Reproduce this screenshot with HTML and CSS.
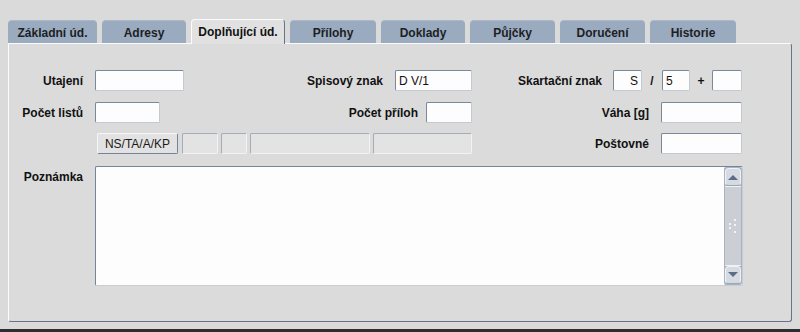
FILE: index.html
```html
<!DOCTYPE html>
<html lang="cs">
<head>
    <meta charset="utf-8">
    <title>Doplňující údaje</title>
    <link rel="stylesheet" href="styles.css">
</head>
<body>
    <div class="tabs">
        <div class="tab t-zakladni">Základní úd.</div>
        <div class="tab t-adresy">Adresy</div>
        <div class="tab active">Doplňující úd.</div>
        <div class="tab t-prilohy">Přílohy</div>
        <div class="tab t-doklady">Doklady</div>
        <div class="tab t-pujcky">Půjčky</div>
        <div class="tab t-doruceni">Doručení</div>
        <div class="tab t-historie">Historie</div>
    </div>

    <div class="panel">
        <div class="row">
            <label class="lbl w74">Utajení</label>
            <input type="text" class="field w89">
            <label class="lbl w199">Spisový znak</label>
            <input type="text" class="field w77" value="D V/1">
            <label class="lbl w130 m11">Skartační znak</label>
            <input type="text" class="field w29 right" value="S">
            <span class="sep w20">/</span>
            <input type="text" class="field w28" value="5">
            <span class="sep w22">+</span>
            <input type="text" class="field w30">
        </div>
        <div class="row">
            <label class="lbl w74">Počet listů</label>
            <input type="text" class="field w65">
            <label class="lbl w258 m8">Počet příloh</label>
            <input type="text" class="field w46">
            <label class="lbl w177">Váha [g]</label>
            <input type="text" class="field w81">
        </div>
        <div class="row row-codes">
            <button type="button" class="btn">NS/TA/A/KP</button>
            <input type="text" class="field off w36" disabled>
            <input type="text" class="field off w26" disabled>
            <input type="text" class="field off w120" disabled>
            <input type="text" class="field off w99" disabled>
            <label class="lbl w177">Poštovné</label>
            <input type="text" class="field w81">
        </div>
        <div class="row memo-row">
            <label class="lbl w74 top">Poznámka</label>
            <div class="memo">
                <textarea class="memo-text"></textarea>
                <div class="scrollbar">
                    <div class="sb-btn">
                        <svg width="12" height="8" viewBox="0 0 12 8"><polygon points="1,7 6,2 11,7" fill="#5b6c86"/></svg>
                    </div>
                    <div class="sb-thumb">
                        <svg width="10" height="16" viewBox="0 0 10 16">
                            <circle cx="7" cy="2" r="1" fill="#fff"/>
                            <circle cx="2" cy="6" r="1" fill="#fff"/>
                            <circle cx="7" cy="7" r="1" fill="#fff"/>
                            <circle cx="2" cy="10" r="1" fill="#fff"/>
                            <circle cx="7" cy="14" r="1" fill="#fff"/>
                        </svg>
                    </div>
                    <div class="sb-btn">
                        <svg width="12" height="8" viewBox="0 0 12 8"><polygon points="1,1 6,6 11,1" fill="#5b6c86"/></svg>
                    </div>
                </div>
            </div>
        </div>
    </div>
    <div class="frame-bottom"></div>
</body>
</html>
```

FILE: styles.css
```css
* {
    box-sizing: border-box;
}
body {
    margin: 0;
    width: 800px;
    height: 332px;
    overflow: hidden;
    background-color: #dadada;
    font-family: "Liberation Sans", Arial, sans-serif;
    font-size: 12px;
    color: #111;
}
.tabs {
    display: flex;
    align-items: flex-end;
    gap: 5px;
    padding: 20px 0 0 8px;
    height: 43px;
}
.tab {
    height: 23px;
    line-height: 25px;
    text-align: center;
    font-weight: bold;
    color: #1c1f24;
    background-color: #9aaabf;
    border-radius: 4px 4px 0 0;
    border-top: 1px solid #aab8ca;
}
.tab.active {
    position: relative;
    z-index: 1;
    height: 25px;
    line-height: 25px;
    margin-bottom: -1px;
    width: 94px;
    color: #111;
    background-color: #e1e1e1;
    border: 1px solid #fbfbfb;
    border-bottom: none;
    border-right-color: #66748a;
}
.t-zakladni { width: 89px; }
.t-adresy { width: 84px; }
.t-prilohy { width: 86px; }
.t-doklady { width: 84px; }
.t-pujcky { width: 85px; }
.t-doruceni { width: 85px; }
.t-historie { width: 86px; }

.panel {
    margin-left: 8px;
    width: 784px;
    height: 279px;
    padding-top: 26px;
    background-color: #dbdbdb;
    border: 1px solid #fcfcfc;
    border-right-color: #66748a;
    border-bottom-color: #66748a;
    border-radius: 0 3px 3px 3px;
}
.row {
    display: flex;
    align-items: center;
    height: 21px;
    margin-bottom: 11px;
}
.row-codes {
    margin-top: -1px;
    margin-bottom: 12px;
}
.lbl {
    flex: none;
    text-align: right;
    font-weight: bold;
    margin-right: 12px;
    white-space: nowrap;
}
.lbl.m11 { margin-right: 11px; }
.lbl.m8 { margin-right: 8px; }
.lbl.top {
    align-self: flex-start;
    padding-top: 4px;
}
.field {
    flex: none;
    height: 21px;
    padding: 0 3px;
    font-family: "Liberation Sans", Arial, sans-serif;
    font-size: 12px;
    color: #111;
    background-color: #fdfdfd;
    border: 1px solid #7a889c;
    border-right-color: #c3c9d1;
    border-bottom-color: #c3c9d1;
    border-radius: 2px;
    outline: none;
}
.field.right {
    text-align: right;
}
.field.off {
    background-color: #e3e3e3;
    border-color: #a3acb8;
    border-right-color: #f2f2f2;
    border-bottom-color: #f2f2f2;
    margin-right: 3px;
}
.field.off.w99 { margin-right: 0; }
.sep {
    flex: none;
    text-align: center;
    font-weight: bold;
}
.btn {
    flex: none;
    width: 81px;
    height: 21px;
    margin-left: 88px;
    margin-right: 4px;
    padding: 0;
    font-family: "Liberation Sans", Arial, sans-serif;
    font-size: 12px;
    color: #1a1a1a;
    background-color: #e2e2e2;
    border: 1px solid #f6f6f6;
    border-right-color: #75839a;
    border-bottom-color: #75839a;
    border-radius: 2px;
}

.w20 { width: 20px; }
.w22 { width: 22px; }
.w26 { width: 26px; }
.w28 { width: 28px; }
.w29 { width: 29px; }
.w30 { width: 30px; }
.w36 { width: 36px; }
.w46 { width: 46px; }
.w65 { width: 65px; }
.w74 { width: 74px; }
.w77 { width: 77px; }
.w81 { width: 81px; }
.w89 { width: 89px; }
.w99 { width: 99px; }
.w120 { width: 120px; }
.w130 { width: 130px; }
.w177 { width: 177px; }
.w199 { width: 199px; }
.w258 { width: 258px; }

.memo-row {
    height: 120px;
    align-items: flex-start;
}
.memo {
    display: flex;
    width: 648px;
    height: 120px;
    background-color: #fdfdfd;
    border: 1px solid #76849a;
    border-right-color: #c8cdd4;
    border-bottom-color: #c8cdd4;
    border-radius: 2px;
}
.memo-text {
    flex: 1;
    border: none;
    resize: none;
    overflow: hidden;
    background: transparent;
    outline: none;
}
.scrollbar {
    display: flex;
    flex-direction: column;
    width: 18px;
    padding: 1px;
    background-color: #a9b4c3;
    border-radius: 2px;
}
.sb-btn {
    height: 18px;
    display: flex;
    align-items: center;
    justify-content: center;
    background-color: #d6dbe1;
    border: 1px solid #f0f2f5;
    border-bottom-color: #9ba7b7;
    border-radius: 4px;
}
.sb-thumb {
    flex: 1;
    display: flex;
    align-items: center;
    justify-content: center;
    background-color: #cbcfd5;
    border-top: 1px solid #f0f2f4;
    border-bottom: 1px solid #f0f2f4;
}

.frame-bottom {
    margin-top: 7px;
    height: 3px;
    background-color: #2e2e2e;
}
```
